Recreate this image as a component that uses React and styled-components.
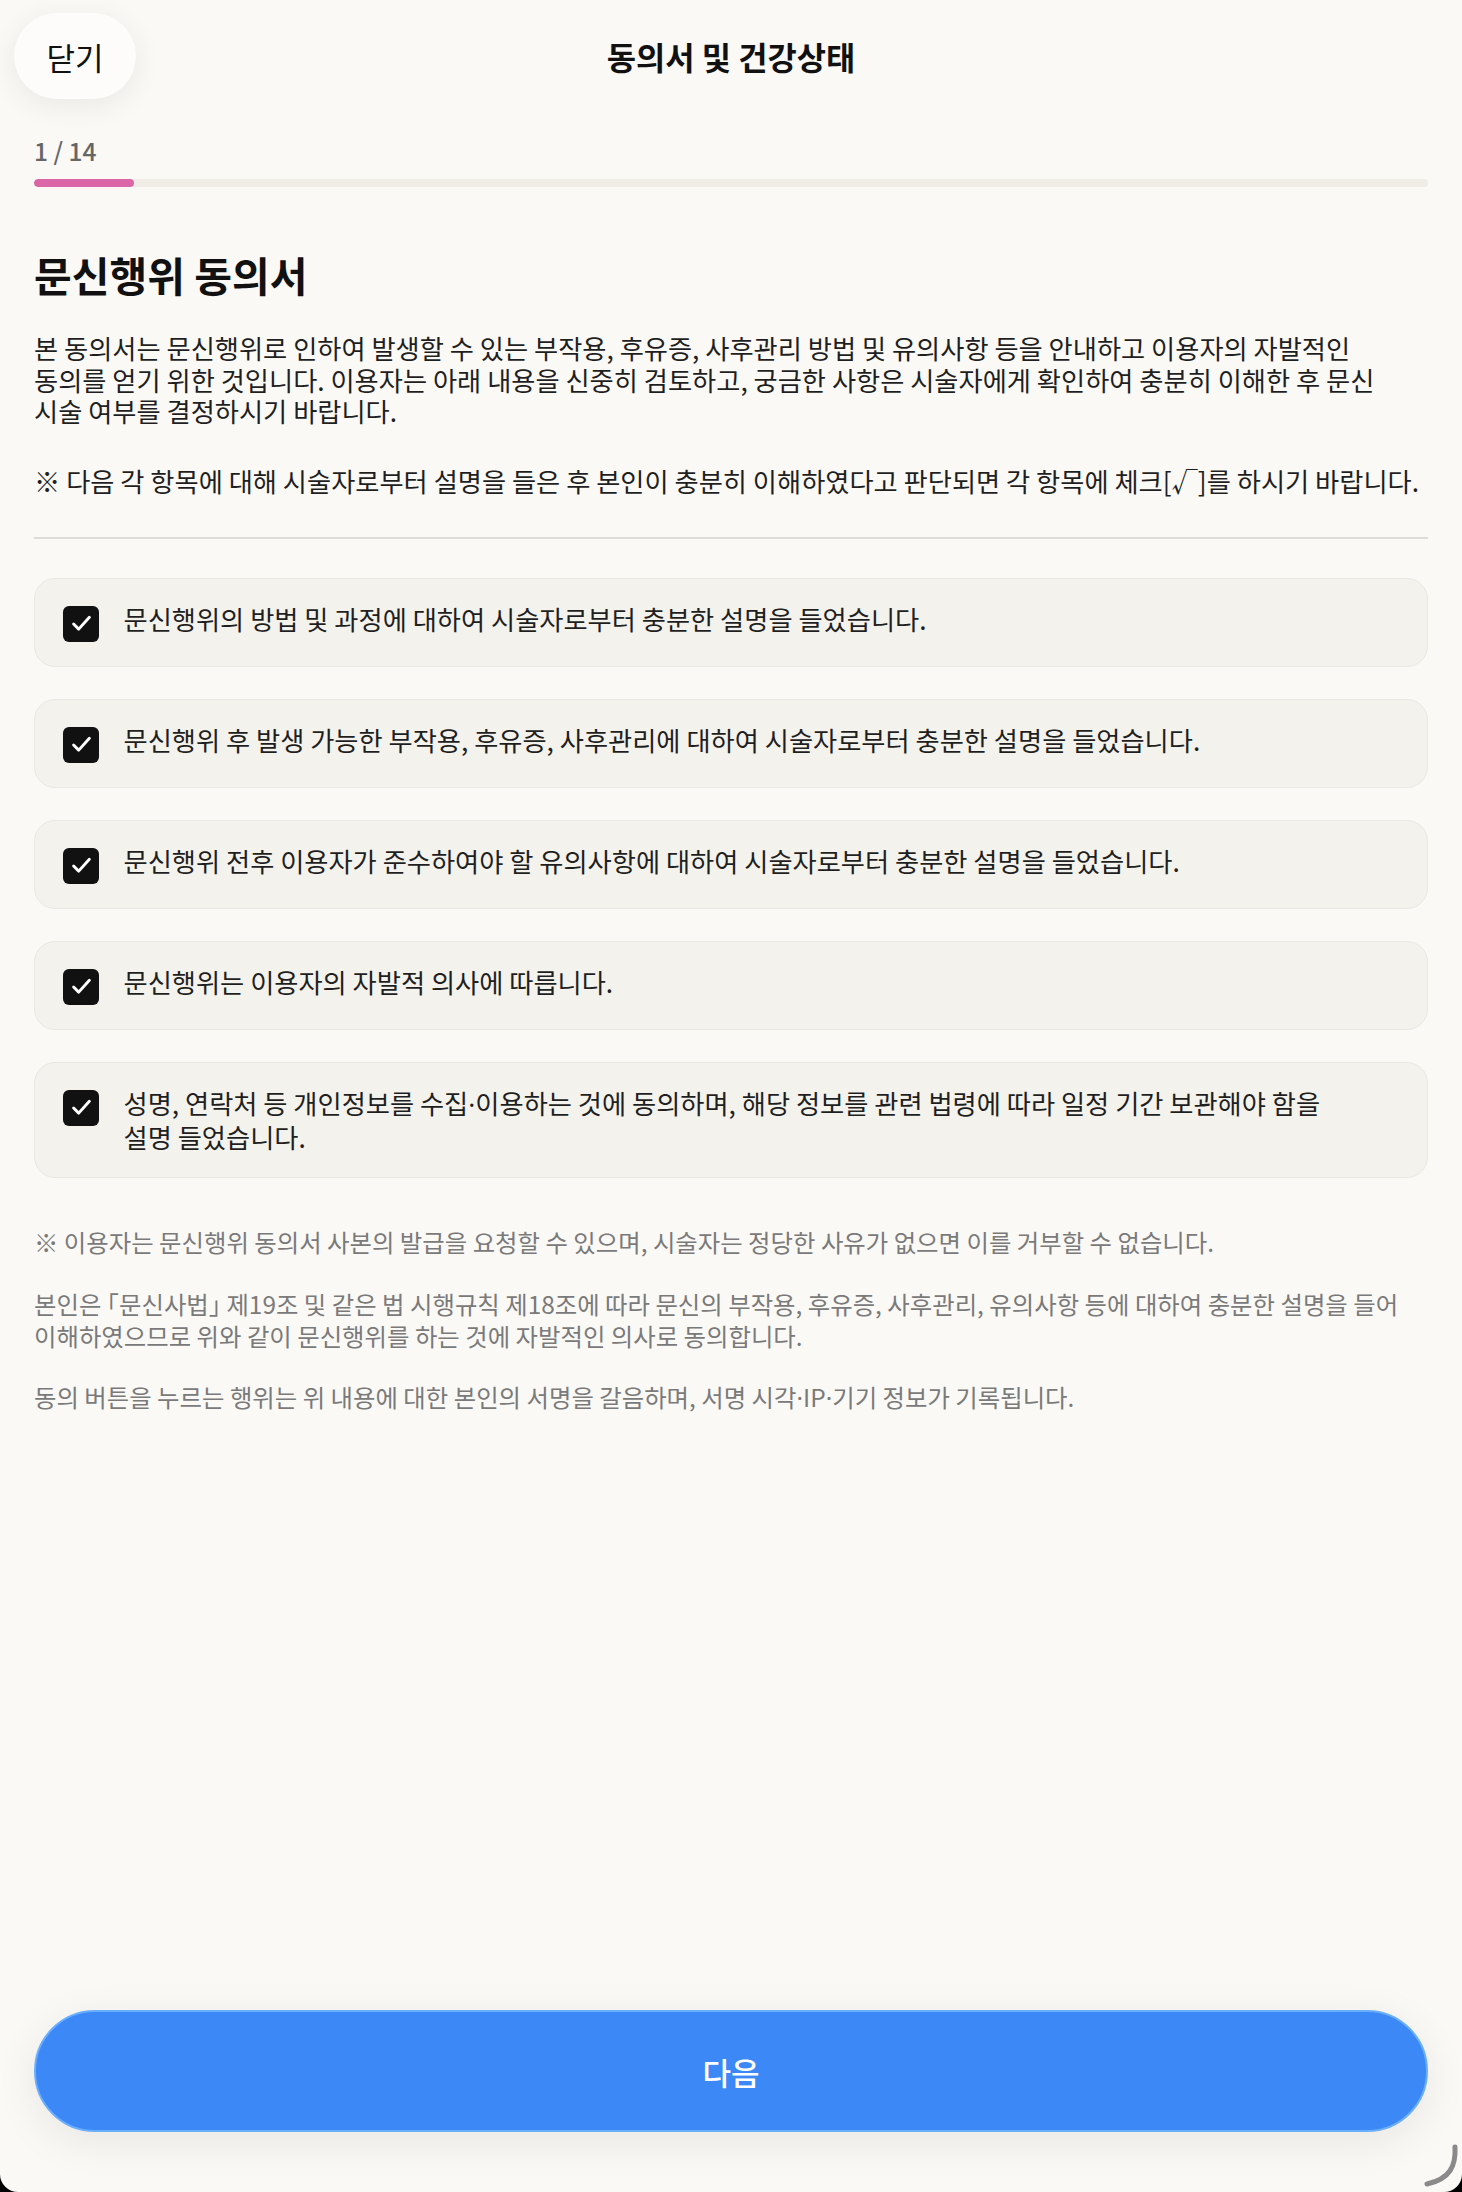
import styled, { createGlobalStyle } from "styled-components";

const GlobalStyle = createGlobalStyle`
  html, body {
    margin: 0;
    padding: 0;
    background: #000;
  }
  * {
    box-sizing: border-box;
  }
`;

const Page = styled.div`
  position: relative;
  min-height: 100vh;
  display: flex;
  flex-direction: column;
  background: #faf9f6;
  border-radius: 0 0 18px 18px;
  overflow: hidden;
  font-family: "Noto Sans CJK KR", "Noto Sans", sans-serif;
  color: #1f1f1f;
  word-break: keep-all;
`;

const Header = styled.header`
  display: grid;
  grid-template-columns: 1fr auto 1fr;
  align-items: center;
  padding: 13px 14px 0;
`;

const CloseButton = styled.button`
  justify-self: start;
  width: 122px;
  height: 86px;
  border: none;
  border-radius: 43px;
  background: #fdfcfa;
  box-shadow: 0 6px 30px rgba(0, 0, 0, 0.07);
  font-family: inherit;
  font-size: 31px;
  color: #111;
  cursor: pointer;
`;

const Title = styled.h1`
  margin: 0;
  font-size: 31.8px;
  font-weight: 700;
  color: #111;
`;

const Progress = styled.div`
  margin-top: 36px;
  padding: 0 34px;
`;

const Step = styled.div`
  font-size: 24.5px;
  line-height: 32px;
  font-weight: 500;
  color: #666;
`;

const Track = styled.div`
  margin-top: 12px;
  height: 8px;
  border-radius: 4px;
  background: #f0ede7;
  overflow: hidden;
`;

const Fill = styled.div`
  width: ${(p) => p.$percent}%;
  height: 100%;
  border-radius: 4px;
  background: #da66a8;
`;

const Main = styled.main`
  padding: 0 34px;
`;

const Heading = styled.h2`
  margin: 61px 0 0;
  font-size: 41px;
  line-height: 53px;
  font-weight: 700;
  color: #111;
`;

const Paragraph = styled.p`
  margin: ${(p) => p.$top || 0}px 0 0;
  font-size: 26.25px;
  line-height: 1.2;
  color: #1f1f1f;
  white-space: ${(p) => (p.$single ? "nowrap" : "normal")};
`;

const Divider = styled.hr`
  margin: 40px 0 39px;
  border: none;
  height: 2px;
  background: #dedcd7;
`;

const List = styled.div`
  display: flex;
  flex-direction: column;
  gap: 32.5px;
`;

const Card = styled.label`
  display: flex;
  align-items: flex-start;
  gap: 24.5px;
  padding: 24px 28px;
  border: 1px solid #ebe8e2;
  border-radius: 21px;
  background: #f4f2ec;
  cursor: pointer;
`;

const Box = styled.span`
  flex-shrink: 0;
  width: 36px;
  height: 36px;
  margin-top: 2.5px;
  border-radius: 6px;
  background: #111;
  display: flex;
  align-items: center;
  justify-content: center;
`;

const CardText = styled.span`
  flex: 1;
  padding-right: 28px;
  font-size: 26.25px;
  line-height: 1.24;
  color: #1f1f1f;
`;

const Notes = styled.div`
  margin-top: 48px;
  display: flex;
  flex-direction: column;
  gap: 30px;
`;

const Note = styled.p`
  margin: 0;
  font-size: 24.4px;
  line-height: 1.3;
  color: #7a7a7a;
`;

const Punct = styled.span`
  font-family: ${(p) => (p.$latin ? '"Noto Sans", sans-serif' : "inherit")};
  font-feature-settings: "halt";
`;

const Spacer = styled.div`
  flex: 1;
`;

const Footer = styled.footer`
  padding: 0 34px 60px;
`;

const NextButton = styled.button`
  width: 100%;
  height: 122px;
  border: 2px solid #6aaeff;
  border-radius: 61px;
  background: #3b88f6;
  box-shadow: 0 10px 44px rgba(0, 0, 0, 0.08);
  font-family: inherit;
  font-size: 31px;
  font-weight: 500;
  color: #fff;
  cursor: pointer;
`;

const CornerMark = styled.svg`
  position: absolute;
  right: 2px;
  bottom: 4px;
`;

const items = [
  "문신행위의 방법 및 과정에 대하여 시술자로부터 충분한 설명을 들었습니다.",
  "문신행위 후 발생 가능한 부작용, 후유증, 사후관리에 대하여 시술자로부터 충분한 설명을 들었습니다.",
  "문신행위 전후 이용자가 준수하여야 할 유의사항에 대하여 시술자로부터 충분한 설명을 들었습니다.",
  "문신행위는 이용자의 자발적 의사에 따릅니다.",
  "성명, 연락처 등 개인정보를 수집·이용하는 것에 동의하며, 해당 정보를 관련 법령에 따라 일정 기간 보관해야 함을 설명 들었습니다.",
];

// narrow the full-width punctuation the CJK font gives to · and 「」
const tidy = (text) =>
  text.split(/([·「」])/).map((part, i) =>
    part === "·" ? (
      <Punct key={i} $latin>
        {part}
      </Punct>
    ) : part === "「" || part === "」" ? (
      <Punct key={i}>{part}</Punct>
    ) : (
      part
    )
  );

const CheckIcon = () => (
  <svg width="27" height="27" viewBox="0 0 24 24" fill="none" stroke="#fff" strokeWidth="2.6" strokeLinecap="round" strokeLinejoin="round">
    <path d="M19 6.5 9.5 17 5 12.5" />
  </svg>
);

const App = () => {
  const step = 1;
  const total = 14;

  return (
    <>
      <GlobalStyle />
      <Page>
        <Header>
          <CloseButton>닫기</CloseButton>
          <Title>동의서 및 건강상태</Title>
          <span />
        </Header>

        <Progress>
          <Step>
            {step} / {total}
          </Step>
          <Track>
            <Fill $percent={(step / total) * 100} />
          </Track>
        </Progress>

        <Main>
          <Heading>문신행위 동의서</Heading>
          <Paragraph $top={32}>
            본 동의서는 문신행위로 인하여 발생할 수 있는 부작용, 후유증, 사후관리 방법 및 유의사항 등을 안내하고 이용자의 자발적인 동의를 얻기 위한 것입니다. 이용자는 아래 내용을 신중히 검토하고, 궁금한 사항은 시술자에게 확인하여 충분히 이해한 후 문신 시술 여부를 결정하시기 바랍니다.
          </Paragraph>
          <Paragraph $top={38} $single>
            ※ 다음 각 항목에 대해 시술자로부터 설명을 들은 후 본인이 충분히 이해하였다고 판단되면 각 항목에 체크[√]를 하시기 바랍니다.
          </Paragraph>

          <Divider />

          <List>
            {items.map((text) => (
              <Card key={text}>
                <Box>
                  <CheckIcon />
                </Box>
                <CardText>{tidy(text)}</CardText>
              </Card>
            ))}
          </List>

          <Notes>
            <Note>※ 이용자는 문신행위 동의서 사본의 발급을 요청할 수 있으며, 시술자는 정당한 사유가 없으면 이를 거부할 수 없습니다.</Note>
            <Note>
              {tidy(
                "본인은 「문신사법」 제19조 및 같은 법 시행규칙 제18조에 따라 문신의 부작용, 후유증, 사후관리, 유의사항 등에 대하여 충분한 설명을 들어 이해하였으므로 위와 같이 문신행위를 하는 것에 자발적인 의사로 동의합니다."
              )}
            </Note>
            <Note>{tidy("동의 버튼을 누르는 행위는 위 내용에 대한 본인의 서명을 갈음하며, 서명 시각·IP·기기 정보가 기록됩니다.")}</Note>
          </Notes>
        </Main>

        <Spacer />

        <Footer>
          <NextButton>다음</NextButton>
        </Footer>

        <CornerMark width="40" height="44" viewBox="0 0 40 44">
          <path d="M35 3 C36 22 30 35 7 40" fill="none" stroke="#8a8a8a" strokeWidth="5" strokeLinecap="round" />
        </CornerMark>
      </Page>
    </>
  );
};

export default App;
